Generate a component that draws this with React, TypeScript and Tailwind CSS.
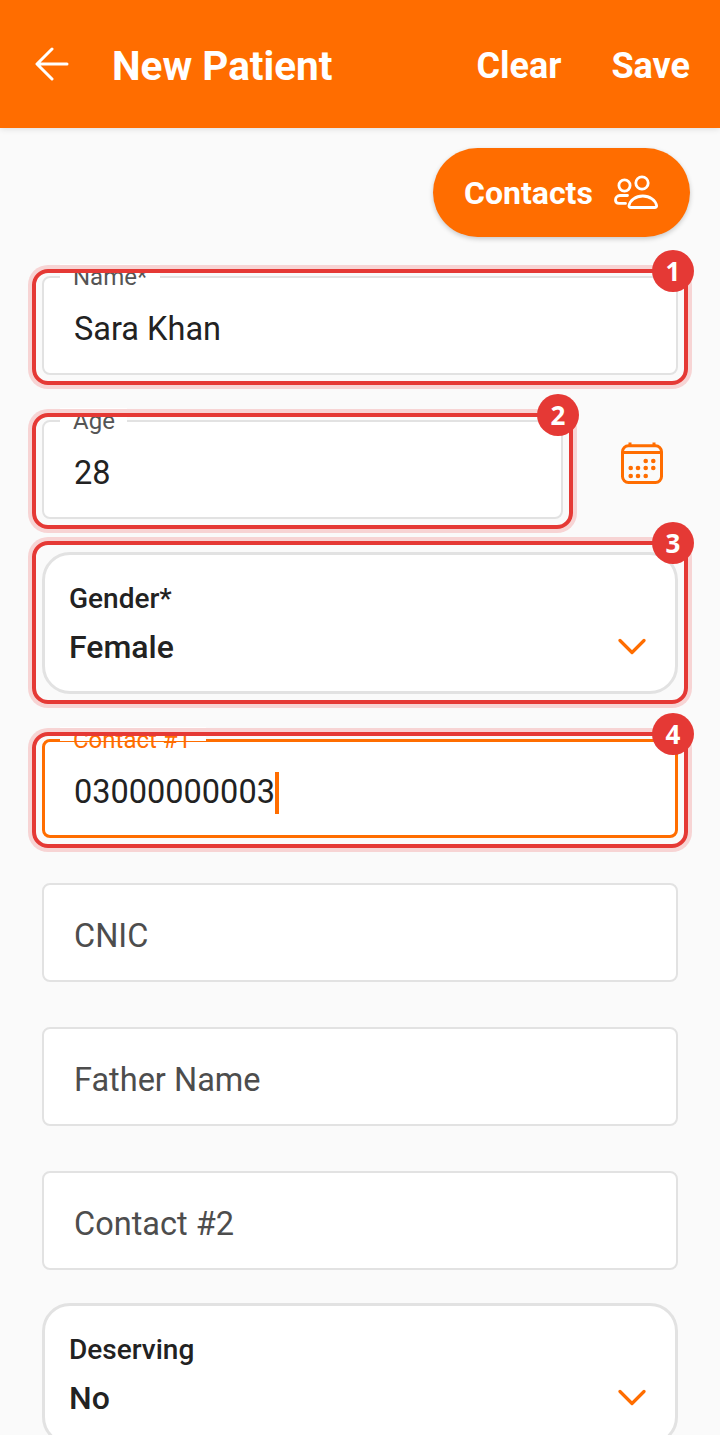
import React from 'react'

const ArrowIcon = () => (
  <svg width="34" height="34" viewBox="0 0 34 34" fill="none" stroke="currentColor" strokeWidth="3" strokeLinecap="round" strokeLinejoin="round">
    <path d="M32 17H3M17 2L2 17L17 32" />
  </svg>
)

const Chevron = ({ className }: { className: string }) => (
  <svg width="28" height="17" viewBox="0 0 28 17" fill="none" stroke="#ff6d00" strokeWidth="3.2" strokeLinecap="round" strokeLinejoin="round" className={className}>
    <path d="M2 2.5L14 14.5L26 2.5" />
  </svg>
)

const ContactsIcon = () => (
  <svg width="46" height="36" viewBox="0 0 46 36" fill="none" stroke="currentColor" strokeWidth="2.8" className="text-white">
    <circle cx="10.5" cy="10.5" r="5.6" />
    <circle cx="28" cy="8" r="6.2" />
    <path d="M13.5 20.5H6C3.2 20.5 1.5 22.6 1.5 25C1.5 27 3 28.4 5 28.4H11.5" strokeLinecap="round" />
    <path d="M17 32.5C15.6 32.5 14.8 31.6 15 30.5C16 25.3 21.5 21 28.8 21C36 21 41.6 25.3 42.6 30.5C42.8 31.6 42 32.5 40.6 32.5Z" strokeLinejoin="round" />
  </svg>
)

const CalendarIcon = () => (
  <svg width="42" height="42" viewBox="0 0 42 42" fill="none" className="text-[#ff6d00]">
    <rect x="1.5" y="3.7" width="39" height="36.8" rx="6" stroke="currentColor" strokeWidth="3" />
    <path d="M1.5 10.5H40.5M9 0.5V4M33 0.5V4" stroke="currentColor" strokeWidth="3" />
    <g fill="currentColor">
      <circle cx="24.7" cy="19" r="2.3" />
      <circle cx="32.3" cy="19" r="2.3" />
      <circle cx="9.7" cy="26" r="2.3" />
      <circle cx="17" cy="26" r="2.3" />
      <circle cx="24.7" cy="26" r="2.3" />
      <circle cx="32.3" cy="26" r="2.3" />
      <circle cx="9.7" cy="34" r="2.3" />
      <circle cx="17" cy="34" r="2.3" />
      <circle cx="24.7" cy="34" r="2.3" />
    </g>
  </svg>
)

// red callout drawn over a field
const Highlight = ({ n, top = '-top-[7px]' }: { n: number; top?: string }) => (
  <div className={`pointer-events-none absolute -left-[10px] -right-[10px] -bottom-[10px] ${top} z-10 rounded-[16px] border-[4.5px] border-[#e53935] shadow-[0_0_0_4px_#f7d4d4]`}>
    <span className="absolute -right-[10px] -top-[23px] flex h-[42px] w-[42px] items-center justify-center rounded-full bg-[#e53935] text-[26px] font-bold text-white font-['Open_Sans',sans-serif]">
      {n}
    </span>
  </div>
)

type FieldProps = {
  label?: string
  value?: string
  placeholder?: string
  notch?: string
  focused?: boolean
  badge?: number
  className?: string
}

const Field = ({ label, value, placeholder, notch, focused, badge, className = '' }: FieldProps) => (
  <div className={`relative h-[99px] ${className}`}>
    <div className={`flex h-full items-center rounded-[8px] bg-white pt-[8px] text-[32.5px] ${focused ? 'border-[3px] border-[#ff6d00] pl-[29px]' : 'border-2 border-[#e2e2e2] pl-[30px]'}`}>
      {value ? <span className="text-[#222222]">{value}</span> : <span className="text-[#4d4d4d]">{placeholder}</span>}
      {focused && <span className="h-[42px] w-[4px] shrink-0 bg-[#ff6d00]" />}
    </div>
    {label && (
      <span className={`absolute -top-[12px] left-[18px] h-[14px] bg-white pl-[13px] text-[24px] leading-[26px] ${notch} ${focused ? 'text-[#ff6d00]' : 'text-[#555555]'}`}>
        {label}
      </span>
    )}
    {badge && <Highlight n={badge} />}
  </div>
)

const SelectField = ({ label, value, badge }: { label: string; value: string; badge?: number }) => (
  <div className="relative h-[142px]">
    <div className="relative h-full rounded-[28px] border-[3px] border-[#e2e2e2] bg-white pl-[24px] pt-[26px]">
      <div className="text-[28px] font-medium leading-[36px] text-[#222222]">{label}</div>
      <div className="mt-[12px] text-[32px] font-medium leading-[36px] text-[#222222]">{value}</div>
      <Chevron className="absolute right-[29px] top-[83px]" />
    </div>
    {badge && <Highlight n={badge} top="-top-[11px]" />}
  </div>
)

export default function App() {
  return (
    <div className="h-[1435px] overflow-hidden bg-[#fafafa] font-['Roboto',sans-serif]">
      <header className="flex h-[128px] items-center bg-[#ff6d00] pl-[35px] pr-[30px] text-white shadow-[0_1px_6px_rgba(0,0,0,0.12)]">
        <ArrowIcon />
        <h1 className="ml-[43px] flex-1 pt-[4px] text-[40.5px] font-bold">New Patient</h1>
        <span className="pt-[4px] text-[36px] font-bold">Clear</span>
        <span className="ml-[50px] pt-[4px] text-[36px] font-bold">Save</span>
      </header>

      <div className="flex justify-end pr-[30px] pt-[20px]">
        <div className="flex h-[89px] w-[257px] items-center gap-[21px] rounded-full bg-[#ff6d00] pl-[31px] text-[32px] font-bold text-white shadow-[0_2px_5px_rgba(0,0,0,0.2)]">
          Contacts
          <ContactsIcon />
        </div>
      </div>

      <main className="flex flex-col px-[42px] pt-[39px]">
        <Field label="Name*" value="Sara Khan" notch="w-[100px]" badge={1} />
        <div className="mt-[45px] flex items-start">
          <Field label="Age" value="28" notch="w-[67px]" badge={2} className="w-[521px]" />
          <div className="ml-[58px] mt-[22px]">
            <CalendarIcon />
          </div>
        </div>
        <div className="mt-[33px]">
          <SelectField label="Gender*" value="Female" badge={3} />
        </div>
        <Field label="Contact #1" value="03000000003" notch="w-[146px]" focused badge={4} className="mt-[45px]" />
        <Field placeholder="CNIC" className="mt-[45px]" />
        <Field placeholder="Father Name" className="mt-[45px]" />
        <Field placeholder="Contact #2" className="mt-[45px]" />
        <div className="mt-[33px]">
          <SelectField label="Deserving" value="No" />
        </div>
      </main>
    </div>
  )
}
